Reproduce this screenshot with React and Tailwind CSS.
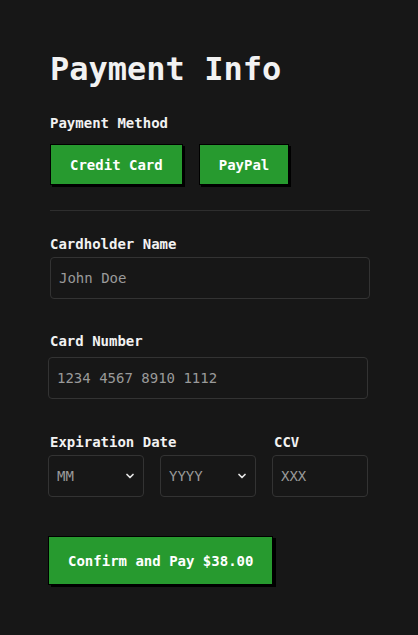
import { ChevronDown } from 'lucide-react';

const mono = { fontFamily: '"DejaVu Sans Mono", "Liberation Mono", monospace' };

function Select({ placeholder }) {
  return (
    <div className="relative">
      <select
        defaultValue=""
        className="w-full h-[42px] appearance-none bg-[#171717] border border-[#333333] rounded-[4px] pl-2 pr-6 text-sm text-[#9a9a9a] outline-none"
        style={mono}
      >
        <option value="" disabled>{placeholder}</option>
      </select>
      <ChevronDown
        size={12}
        strokeWidth={3.5}
        className="absolute right-[8px] top-[15px] text-[#e5e5e5] pointer-events-none"
      />
    </div>
  );
}

export default function App() {
  return (
    <div className="min-h-[635px] w-[418px] bg-[#171717] text-[#f2f2f2]" style={mono}>
      <div className="pl-[50px] pt-[49px] w-[370px]">
        <h1 className="text-[32px] leading-[40px] font-bold tracking-[0px]">Payment Info</h1>

        <p className="mt-[24px] text-sm leading-5 font-bold">Payment Method</p>
        <div className="mt-[11px] flex gap-[16px]">
          <button className="h-[41px] px-[19px] bg-[#279a2f] border border-black text-sm font-bold text-white shadow-[2px_2px_0_#000]">
            Credit Card
          </button>
          <button className="h-[41px] px-[19px] bg-[#279a2f] border border-black text-sm font-bold text-white shadow-[2px_2px_0_#000]">
            PayPal
          </button>
        </div>

        <hr className="mt-[25px] border-t border-[#2e2e2e]" />

        <label className="block mt-[23px] text-sm leading-5 font-bold">Cardholder Name</label>
        <input
          placeholder="John Doe"
          className="mt-[3px] w-full h-[42px] bg-[#171717] border border-[#333333] rounded-[4px] px-2 text-sm text-[#f2f2f2] placeholder:text-[#9a9a9a] outline-none"
          style={mono}
        />

        <label className="block mt-[32px] text-sm leading-5 font-bold">Card Number</label>
        <input
          placeholder="1234 4567 8910 1112"
          className="mt-[6px] ml-[-2px] w-full h-[42px] bg-[#171717] border border-[#333333] rounded-[4px] px-2 text-sm text-[#f2f2f2] placeholder:text-[#9a9a9a] outline-none"
          style={mono}
        />

        <div className="mt-[33px] ml-[-2px] w-[320px] grid grid-cols-3 gap-x-4">
          <label className="col-span-2 ml-[2px] text-sm leading-5 font-bold">Expiration Date</label>
          <label className="ml-[2px] text-sm leading-5 font-bold">CCV</label>
          <div className="mt-[3px]"><Select placeholder="MM" /></div>
          <div className="mt-[3px]"><Select placeholder="YYYY" /></div>
          <input
            placeholder="XXX"
            className="mt-[3px] w-full h-[42px] bg-[#171717] border border-[#333333] rounded-[4px] px-2 text-sm text-[#f2f2f2] placeholder:text-[#9a9a9a] outline-none"
            style={mono}
          />
        </div>

        <button className="mt-[39px] ml-[-2px] h-[49px] px-[19px] bg-[#279a2f] border border-black text-sm font-bold text-white shadow-[3px_2px_0_#000]">
          Confirm and Pay $38.00
        </button>
      </div>
    </div>
  );
}
